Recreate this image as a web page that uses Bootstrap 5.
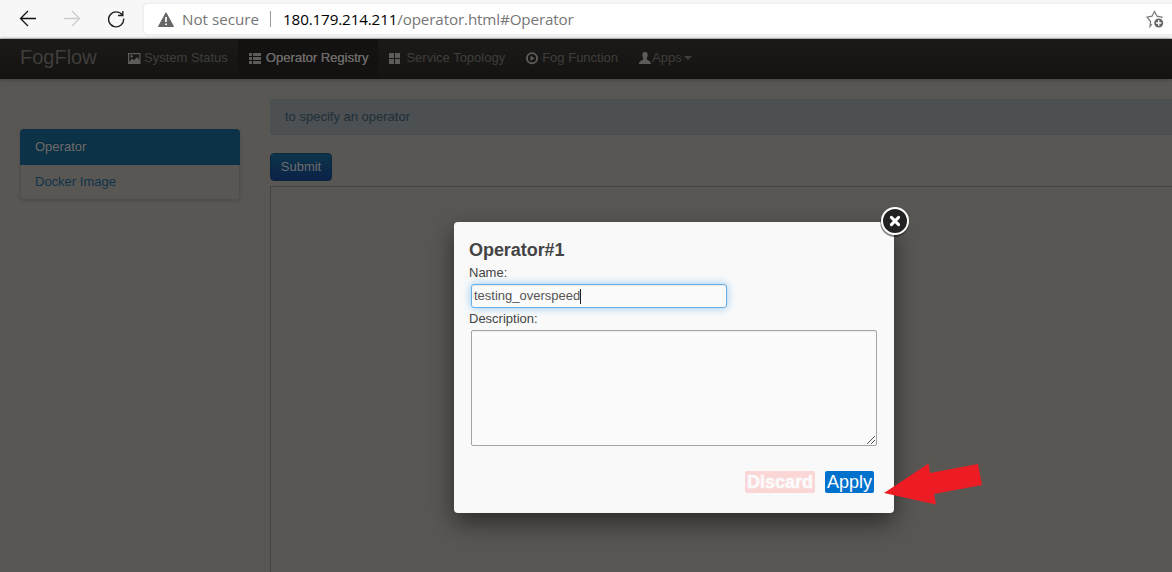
<!DOCTYPE html>
<html lang="en">
<head>
<meta charset="utf-8">
<title>FogFlow</title>
<link href="https://cdn.jsdelivr.net/npm/bootstrap@5.3.0/dist/css/bootstrap.min.css" rel="stylesheet">
<style>
html,body{height:100%}
body{background:#595754;font:13px/18px "Liberation Sans",Arial,sans-serif;color:#333;overflow:hidden}
.browser{height:39px;background:#f7f7f7;border-bottom:1px solid #cfd5cf;font:15.2px/30px "Open Sans","Noto Sans",sans-serif}
.tools{width:144px;padding:0 19px 0 19px}
.tools svg+svg{margin-left:8px}
.address{height:30px;margin-top:4px;background:#fff;border-radius:4px 0 0 4px;padding:0 8px 0 14px;color:#767676;box-shadow:0 0 3px #ddd}
.url{letter-spacing:-.13px}
.sep{width:1px;height:16px;background:#999;margin:0 12px 0 11px}
.topbar{height:40px;padding:0 20px;background:linear-gradient(#1b1a18,#141311);box-shadow:0 1px 4px #444240}
.topbar .brandname{font-size:20px;line-height:20px;color:#403e3c;width:98px;margin-top:-5px}
.topbar a{height:40px;padding:0 10px 3px;color:#403e3c;line-height:37px}
.topbar a.current{background:#131211;color:#6c6a68;text-shadow:.2px 0 #6c6a68}
.topbar svg{fill:#5e5c5a;margin-right:3px}
.topbar .current svg,.topbar .wide-gap svg{margin-right:4px}
.topbar .caret-down{margin:1px 0 0 2px}
.side{width:220px;margin:50px 30px 0 20px;height:71px;border-radius:4px;box-shadow:0 1px 3px #4c4a48}
.side a{padding:9px 15px;display:block;color:#11334a;line-height:17px}
.side a.chosen{background:#0c3247;color:#6e6d6c;border-radius:4px 4px 0 0;height:36px;text-shadow:0 -1px #0a2939}
.side a.other{height:35px;padding:8px 14px;border:1px solid #504e4c;border-top:0;border-radius:0 0 4px 4px}
.content-pane{padding-top:20px}
.info{height:36px;border:1px solid #465053;border-right:0;border-radius:4px 0 0 4px;background:#4c5053;color:#202f38;padding:8px 14px}
.submit{width:62px;height:28px;padding:0 0 1px;margin:18px 0 5px;border:1px solid #0b253e;border-radius:4px;background:linear-gradient(#0c354b,#0b2247);color:#6e6d6c;font-size:13px;line-height:20px}
.board{border:1px solid #454341;border-width:1px 0 0 1px}
.dialogbox{left:454px;top:222px;width:440px;height:291px;background:#f9f9f9;border-radius:4px;box-shadow:0 10px 25px rgba(0,0,0,.5);padding:18px 15px 0;color:#444}
.dialogbox h1{font-size:18px;line-height:20px;font-weight:700;margin:0 0 4px;color:#444;letter-spacing:-.05px}
.namebox{width:256px;height:24px;margin:2px 2px;border:1px solid #66afe9;border-radius:3px;padding:0 2px;color:#555;background:#fbfbfb;box-shadow:inset 0 1px 1px rgba(0,0,0,.075),0 0 8px rgba(82,168,236,.6);line-height:22px}
.caret-bar{width:1px;height:15px;background:#222}
.descbox{width:406px;height:116px;margin:2px 2px 25px;border:1px solid #a3a3a3;border-radius:2px;background:#fbfbfb;box-shadow:inset 0 1px 1px #eee}
.actions{gap:10px;padding-right:5px}
.act{height:22px;border:0;border-radius:2px;padding:0 2px;font-size:18px;line-height:22px;color:#fff}
.discard{width:70px;background:#fad6d6;color:#fafafa;font-weight:700;-webkit-text-stroke:.7px #fafafa}
.apply{width:49px;background:#0072ce}
.closer{left:426px;top:-15px}
.pointer{left:884px;top:463px}
</style>
<script src="https://cdn.jsdelivr.net/npm/bootstrap@5.3.0/dist/js/bootstrap.bundle.min.js"></script>
</head>
<body class="d-flex flex-column">
<header class="browser d-flex flex-shrink-0">
 <div class="tools d-flex align-items-center justify-content-between flex-shrink-0">
  <svg width="18" height="18" fill="none" stroke="#111" stroke-width="1.3"><path d="M17 8.5H1.5M9 1L1.5 8.5L9 16"/></svg>
  <svg width="18" height="18" fill="none" stroke="#ccc" stroke-width="1.3"><path d="M1 8.5H16.5M9 1L16.5 8.5L9 16"/></svg>
  <svg width="18" height="18" fill="none" stroke="#222" stroke-width="1.4"><path d="M15.4 5.2A7.5 7.5 0 1 0 16.6 8.5M15.8 1V5.5H11"/></svg>
 </div>
 <div class="address d-flex align-items-center flex-grow-1">
  <svg width="16" height="15" class="me-2"><path d="M8 .8L15.5 14.5H.5Z" fill="#666" stroke="#666" stroke-linejoin="round"/><path d="M8 5V10M8 11.5V13" stroke="#fff" stroke-width="1.7"/></svg>
  <span>Not secure</span><span class="sep"></span>
  <span class="url"><span class="text-black">180.179.214.211</span>/operator.html#Operator</span>
  <svg class="ms-auto" width="19" height="18" fill="none" stroke="#777" stroke-width="1.2"><path d="M7 14L5 16.5L5.6 11.5L2 7.2L7 6.2L9.5 1.5L12 6.2L17 7.2L16.5 8"/><circle cx="13.7" cy="13" r="4.5" fill="#666" stroke="none"/><path d="M11 13H16.4M13.7 10.3V15.7" stroke="#fff" stroke-width="1.4"/></svg>
 </div>
</header>
<nav class="topbar d-flex align-items-center flex-shrink-0 position-relative">
 <span class="brandname">FogFlow</span>
 <a class="d-flex align-items-center text-decoration-none" href="#"><svg width="13" height="14"><path fill-rule="evenodd" d="M0 2H12.5V13H0ZM1.2 3.2V11L4 7.5L6 9.3L9 6L11.3 9V3.2Z"/><circle cx="3.5" cy="5.2" r="1.2"/></svg>System Status</a>
 <a class="current d-flex align-items-center text-decoration-none" href="#"><svg width="14" height="14"><path d="M1 2H4V5H1ZM5 2H13V5H5ZM1 6H4V9H1ZM5 6H13V9H5ZM1 10H4V13H1ZM5 10H13V13H5Z"/></svg>Operator Registry</a>
 <a class="wide-gap d-flex align-items-center text-decoration-none" href="#"><svg width="14" height="14"><path d="M1 2H6V7H1ZM7 2H12V7H7ZM1 8H6V13H1ZM7 8H12V13H7Z"/></svg>Service Topology</a>
 <a class="d-flex align-items-center text-decoration-none" href="#"><svg width="14" height="14"><circle cx="7" cy="7.2" r="5" fill="none" stroke="#5e5c5a" stroke-width="2"/><circle cx="7" cy="7.2" r="4" fill="#171614"/><path d="M5.5 4.7L9.8 7.2L5.5 9.7Z"/></svg>Fog Function</a>
 <a class="d-flex align-items-center text-decoration-none" href="#"><svg width="14" height="14" class="me-0"><path d="M7 1C9 1 10 2.3 9.7 4.6C9.5 6 8.8 7 8.6 7.8C8.7 9.4 13 9.5 13 13H1C1 9.5 5.3 9.4 5.4 7.8C5.2 7 4.5 6 4.3 4.6C4 2.3 5 1 7 1Z"/></svg>Apps<svg class="caret-down" width="8" height="4"><path d="M0 0H8L4 4Z" fill="#403e3c"/></svg></a>
</nav>
<main class="d-flex flex-grow-1">
 <aside class="side flex-shrink-0"><a class="chosen text-decoration-none" href="#">Operator</a><a class="other text-decoration-none" href="#">Docker Image</a></aside>
 <section class="content-pane d-flex flex-column flex-grow-1">
  <div class="info">to specify an operator</div>
  <button class="submit">Submit</button>
  <div class="board flex-grow-1"></div>
 </section>
</main>
<div class="dialogbox position-absolute">
 <h1>Operator#1</h1>
 <div>Name:</div>
 <div class="namebox d-flex align-items-center">testing_overspeed<span class="caret-bar"></span></div>
 <div>Description:</div>
 <div class="descbox d-flex justify-content-end align-items-end"><svg width="10" height="10" stroke="#555" stroke-width="1"><path d="M1 9L9 1M5 9L9 5"/></svg></div>
 <div class="actions d-flex justify-content-end"><button class="act discard">Discard</button><button class="act apply">Apply</button></div>
 <svg class="closer position-absolute" width="30" height="32"><circle cx="14.5" cy="15.8" r="14.2" fill="#000" opacity=".45"/><circle cx="15" cy="14" r="13" fill="#222" stroke="#fff" stroke-width="2"/><path d="M11.4 10.4L18.6 17.6M18.6 10.4L11.4 17.6" stroke="#fff" stroke-width="3" stroke-linecap="round"/></svg>
</div>
<svg class="pointer position-absolute" width="100" height="43"><path d="M0 30L44.5 .5L46 10L94 1L98 22L50 31L52 41.5Z" fill="#ed1c24"/></svg>
</body>
</html>
